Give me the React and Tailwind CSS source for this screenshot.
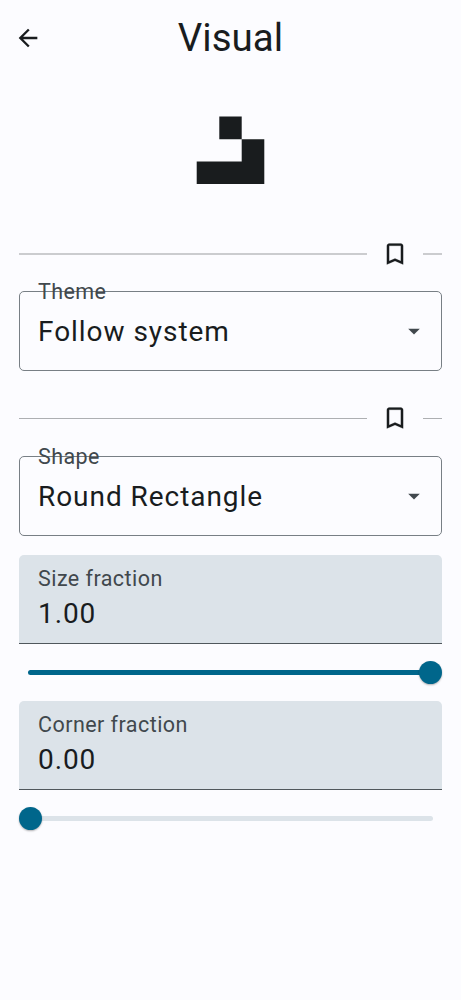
function BackIcon() {
  return (
    <svg className="size-7" viewBox="0 0 24 24" fill="#191c1e">
      <path d="M20 11H7.83l5.59-5.59L12 4l-8 8 8 8 1.41-1.41L7.83 13H20v-2z" />
    </svg>
  );
}

function BookmarkIcon() {
  return (
    <svg className="h-7 w-7" viewBox="0 0 24 24" fill="#191c1e" stroke="#191c1e" strokeWidth="0.15">
      <path d="M17 3H7c-1.1 0-1.99.9-1.99 2L5 21l7-3 7 3V5c0-1.1-.9-2-2-2zm0 15l-5-2.18L7 18V5h10v13z" />
    </svg>
  );
}

function Shape() {
  return (
    <svg className="h-[68px] w-[69px]" viewBox="0 0 69 68" fill="#191c1e">
      <path d="M23.3 0.6H45.7V23.3H23.3Z M45.7 23.3H68.3V68H0.7V45.5H45.7Z" />
    </svg>
  );
}

function SectionDivider({ line }) {
  return (
    <div className="flex h-7 items-center">
      <div className={`flex-1 ${line}`} />
      <div className="flex w-14 justify-center">
        <BookmarkIcon />
      </div>
      <div className={`w-[19px] ${line}`} />
    </div>
  );
}

function Select({ label, value }) {
  return (
    <div className="relative flex h-20 items-center justify-between rounded-[5px] border border-[#787f85] pr-[13px] pl-[18px]">
      <span className="absolute -top-[13px] left-[18px] text-[21.5px] leading-[26px] tracking-[0.42px] text-[#41484d]">
        {label}
      </span>
      <span className="pt-0.5 text-[28px] leading-9 tracking-[0.95px]">{value}</span>
      <svg className="size-7" viewBox="0 0 24 24" fill="#41484d">
        <path d="M7 10l5 5 5-5z" />
      </svg>
    </div>
  );
}

function NumberField({ label, value }) {
  return (
    <div className="h-[89px] rounded-t-[5px] border-b border-[#50575c] bg-[#dce3e9] px-[19px] pt-[11px]">
      <div className="text-[21.5px] leading-[26px] tracking-[0.45px] text-[#41484d]">{label}</div>
      <div className="mt-1 text-[28px] leading-9 tracking-[0.9px]">{value}</div>
    </div>
  );
}

function Slider({ full }) {
  return (
    <div className="relative flex h-[23px] items-center px-[9px]">
      <div className={`h-[5px] flex-1 rounded-full ${full ? "bg-[#00668b]" : "bg-[#dce3e9]"}`} />
      <div
        className={`absolute top-0 size-[23px] rounded-full bg-[#00668b] shadow-[0_1px_2px_rgba(0,0,0,0.3)] ${full ? "right-0" : "left-0"}`}
      />
    </div>
  );
}

export default function App() {
  return (
    <div className="h-[1000px] w-full bg-[#fcfcff] font-['Roboto',sans-serif] text-[#191c1e]">
      <header className="grid h-[75px] grid-cols-[56px_1fr_56px] items-center">
        <button className="flex justify-center" aria-label="Back">
          <BackIcon />
        </button>
        <h1 className="text-center text-[38.5px] leading-[46px]">Visual</h1>
      </header>
      <div className="flex justify-center pt-[41px]">
        <Shape />
      </div>
      <main className="px-[19px] pt-14">
        <SectionDivider line="h-[2px] bg-[#cbcccf]" />
        <div className="pt-[23px]">
          <Select label="Theme" value="Follow system" />
        </div>
        <div className="pt-[33px]">
          <SectionDivider line="h-px bg-[#adafb2]" />
        </div>
        <div className="pt-6">
          <Select label="Shape" value="Round Rectangle" />
        </div>
        <div className="pt-[19px]">
          <NumberField label="Size fraction" value="1.00" />
        </div>
        <div className="pt-[17px]">
          <Slider full />
        </div>
        <div className="pt-[17px]">
          <NumberField label="Corner fraction" value="0.00" />
        </div>
        <div className="pt-[17px]">
          <Slider />
        </div>
      </main>
    </div>
  );
}
